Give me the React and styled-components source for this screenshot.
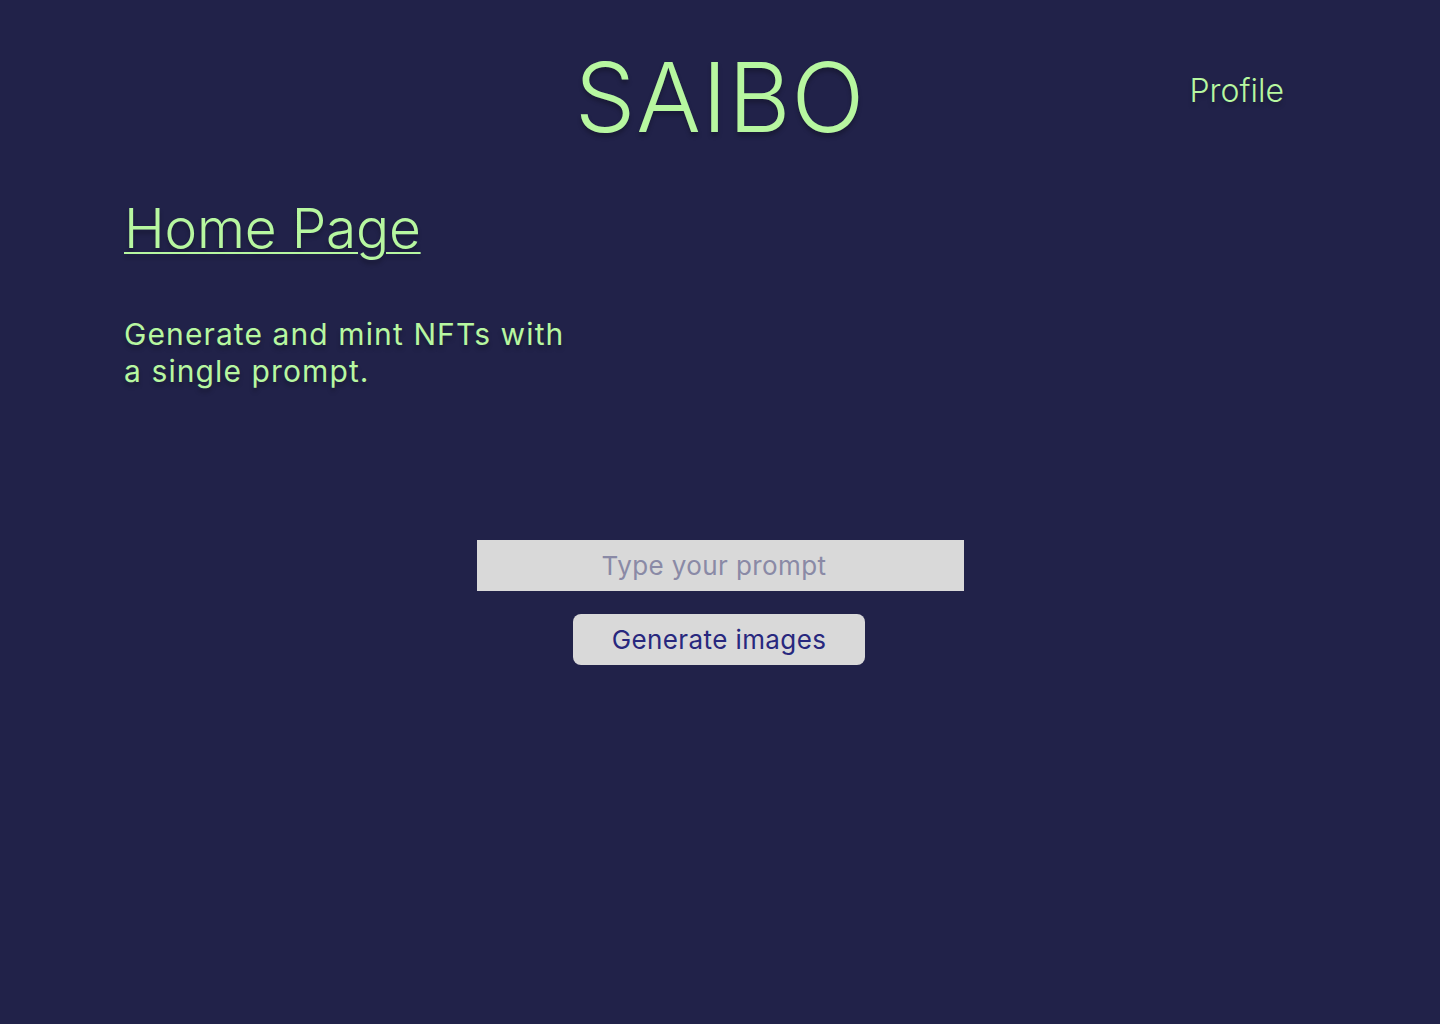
import React, { useState } from "react";
import styled, { createGlobalStyle } from "styled-components";

const GlobalStyle = createGlobalStyle`
  html, body {
    margin: 0;
    padding: 0;
    background: #212249;
  }
  body {
    font-family: "Inter", "Liberation Sans", sans-serif;
  }
`;

const Page = styled.div`
  min-height: 1024px;
  background: #212249;
  color: #b7f7a0;
`;

// header
const Header = styled.header`
  display: grid;
  grid-template-columns: 1fr auto 1fr;
  align-items: start;
  padding: 40px 156px 0 156px;
`;

const Logo = styled.h1`
  grid-column: 2;
  margin: 0;
  font-size: 96px;
  font-weight: 300;
  line-height: 1.2;
  letter-spacing: 1px;
  text-shadow: 0 4px 4px rgba(0, 0, 0, 0.25);
`;

const ProfileLink = styled.a`
  justify-self: end;
  margin-top: 31px;
  font-size: 32px;
  font-weight: 300;
  color: #b7f7a0;
  text-decoration: none;
  text-shadow: 0 4px 4px rgba(0, 0, 0, 0.25);
  cursor: pointer;
`;

// intro
const Intro = styled.section`
  padding: 40px 0 0 124px;
`;

const Title = styled.h2`
  margin: 0;
  font-size: 55px;
  font-weight: 300;
  line-height: 1.2;
  letter-spacing: -0.2px;
  text-decoration: underline;
  text-decoration-thickness: 2px;
  text-underline-offset: 4px;
  text-shadow: 0 4px 4px rgba(0, 0, 0, 0.25);
`;

const Tagline = styled.p`
  margin: 55px 0 0 0;
  max-width: 455px;
  font-size: 30px;
  font-weight: 400;
  line-height: 37px;
  letter-spacing: 1.1px;
  text-shadow: 0 4px 4px rgba(0, 0, 0, 0.25);
`;

// prompt form
const PromptForm = styled.form`
  display: flex;
  flex-direction: column;
  align-items: center;
  gap: 23px;
  margin-top: 150px;
`;

const PromptInput = styled.input`
  box-sizing: border-box;
  width: 487px;
  height: 51px;
  padding: 0 12px 0 0;
  border: none;
  outline: none;
  background: #d9d9d9;
  font-family: inherit;
  font-size: 26px;
  letter-spacing: 0.4px;
  text-align: center;
  color: #2b2b80;

  &::placeholder {
    color: #8a8aa6;
  }
`;

const GenerateButton = styled.button`
  width: 292px;
  height: 51px;
  margin-right: 2px;
  border: none;
  border-radius: 8px;
  background: #d9d9d9;
  color: #28287e;
  font-family: inherit;
  font-size: 26px;
  letter-spacing: 0.4px;
  cursor: pointer;
`;

const App = () => {
  const [prompt, setPrompt] = useState("");

  const handleSubmit = event => {
    event.preventDefault();
  };

  return (
    <Page>
      <GlobalStyle />
      <Header>
        <Logo>SAIBO</Logo>
        <ProfileLink>Profile</ProfileLink>
      </Header>
      <Intro>
        <Title>Home Page</Title>
        <Tagline>Generate and mint NFTs with a single prompt.</Tagline>
      </Intro>
      <PromptForm onSubmit={handleSubmit}>
        <PromptInput
          type="text"
          placeholder="Type your prompt"
          value={prompt}
          onChange={e => setPrompt(e.target.value)}
        />
        <GenerateButton type="submit">Generate images</GenerateButton>
      </PromptForm>
    </Page>
  );
};

export default App;
